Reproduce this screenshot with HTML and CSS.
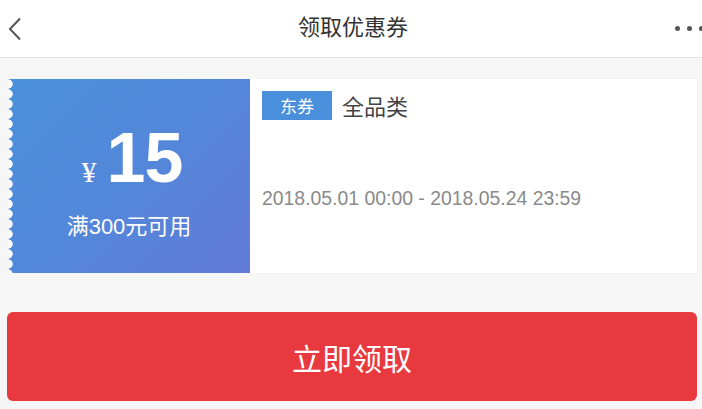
FILE: index.html
```html
<!DOCTYPE html>
<html lang="zh-CN">
<head>
<meta charset="utf-8">
<title>领取优惠券</title>
<link rel="stylesheet" href="styles.css">
</head>
<body>
<header class="topbar">
  <span class="back">
    <svg width="14" height="24" viewBox="0 0 14 24"><path d="M12 1.5 L2 12 L12 22.5" fill="none" stroke="#555" stroke-width="2"/></svg>
  </span>
  <h1 class="title">领取优惠券</h1>
  <span class="more"><i></i><i></i><i></i></span>
</header>
<main class="content">
  <section class="coupon">
    <div class="coupon-left">
      <div class="amount"><span class="yen">¥</span><span class="num">15</span></div>
      <div class="cond">满300元可用</div>
    </div>
    <div class="coupon-right">
      <div class="head"><span class="tag">东券</span><span class="scope">全品类</span></div>
      <div class="date">2018.05.01 00:00 - 2018.05.24 23:59</div>
    </div>
  </section>
  <button class="get">立即领取</button>
</main>
</body>
</html>
```
FILE: styles.css
```css
* { box-sizing: border-box; }
html, body { margin: 0; padding: 0; }
body {
  background: #f6f6f6;
  font-family: "Liberation Sans", Arial, "Noto Sans CJK SC", sans-serif;
  width: 702px;
  height: 409px;
  overflow: hidden;
}
.topbar {
  height: 58px;
  background: #fff;
  border-bottom: 1px solid #e3e3e3;
  display: flex;
  align-items: center;
  justify-content: space-between;
  position: relative;
}
.back { display: flex; padding-left: 8px; }
.title {
  margin: 0;
  font-size: 22px;
  font-weight: normal;
  color: #333;
  position: absolute;
  left: 0; right: 0;
  text-align: center;
  top: 15px;
  line-height: 26px;
  padding-left: 4px;
}
.more { display: flex; gap: 7px; margin-right: -2px; }
.more i { width: 5px; height: 5px; border-radius: 50%; background: #555; display: block; }
.content { padding: 21px 5px 0 8px; }
.coupon { display: flex; height: 194px; background: #fff; }
.coupon-left {
  width: 242px;
  background: linear-gradient(135deg, #4a91da 0%, #5387d9 50%, #627bd8 100%);
  color: #fff;
  display: flex;
  flex-direction: column;
  align-items: center;
  position: relative;
  padding-top: 44px;
}
.coupon-left::before {
  content: "";
  position: absolute;
  left: 0; top: 0; bottom: 0;
  width: 6px;
  background: radial-gradient(circle at 0 5px, #fafafa 4.4px, transparent 5px) 0 0 / 6px 10px repeat-y;
}
.amount { display: flex; align-items: baseline; gap: 10px; margin-left: 6px; }
.yen { font-family: "Liberation Serif", serif; font-size: 30px; }
.num { font-size: 70px; font-weight: bold; line-height: 70px; letter-spacing: -1px; }
.cond { font-size: 22px; margin-top: 15px; }
.coupon-right { flex: 1; padding: 10px 12px; }
.head { display: flex; align-items: center; gap: 10px; }
.tag {
  background: #4a8fdb;
  color: #fff;
  width: 70px;
  height: 29px;
  font-size: 17px;
  display: flex; align-items: center; justify-content: center;
}
.scope { font-size: 22px; color: #444; }
.date { font-size: 19.4px; color: #8a8a8a; margin-top: 66px; }
.get {
  display: block;
  width: 690px;
  height: 89px;
  margin: 39px 0 0 -1px;
  border: none;
  border-radius: 6px;
  background: #e8393e;
  color: #fff;
  font-size: 30px;
  font-family: "Liberation Sans", Arial, "Noto Sans CJK SC", sans-serif;
  padding: 0;
}
```
